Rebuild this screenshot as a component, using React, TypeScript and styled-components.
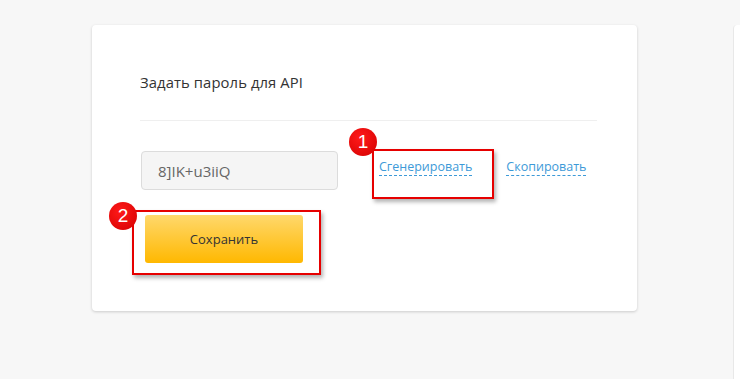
import styled, { createGlobalStyle } from "styled-components";

const GlobalStyle = createGlobalStyle`
    html, body {
        margin: 0;
        padding: 0;
        background: #f7f7f7;
        font-family: "Open Sans", "DejaVu Sans", sans-serif;
    }
`;

const Page = styled.div`
    display: flex;
    align-items: flex-start;
    gap: 96px;
    padding: 25px 0 0 92px;
    height: 354px;
    overflow: hidden;
`;

const Card = styled.div`
    width: 545px;
    height: 286px;
    flex-shrink: 0;
    box-sizing: border-box;
    background: #fff;
    border-radius: 4px;
    box-shadow: 0 1px 3px rgba(0, 0, 0, 0.18);
    padding: 0 40px 0 48px;
`;

const SidePanel = styled.div`
    width: 200px;
    height: 360px;
    flex-shrink: 0;
    background: #fff;
    border-left: 1px solid #e8e8e8;
    border-radius: 4px 0 0 0;
`;

const Title = styled.h2`
    margin: 0;
    padding: 47px 0 28px;
    font-size: 14.8px;
    font-weight: 400;
    color: #333;
    line-height: 20px;
    letter-spacing: 0.1px;
    border-bottom: 1px solid #efefef;
`;

const Body = styled.div`
    display: flex;
    flex-direction: column;
    gap: 25px;
    padding-top: 30px;
`;

const Row = styled.div`
    display: flex;
    align-items: flex-start;
`;

const Input = styled.input`
    width: 197px;
    height: 39px;
    box-sizing: border-box;
    margin-left: 1px;
    padding: 0 16px;
    background: #f5f5f5;
    border: 1px solid #dcdcdc;
    border-radius: 4px;
    font-family: inherit;
    font-size: 15px;
    color: #666;
    outline: none;
`;

const Links = styled.div`
    display: flex;
    gap: 34px;
    margin-left: 41px;
    padding-top: 7px;
`;

const DashLink = styled.a`
    font-size: 12.5px;
    color: #3d9ad8;
    text-decoration: none;
    border-bottom: 1px dashed #3d9ad8;
    line-height: 17px;
    cursor: pointer;
`;

const Annotated = styled.div`
    position: relative;
    display: inline-flex;
`;

const Frame = styled.div<{ $l: number; $t: number; $r: number; $b: number }>`
    position: absolute;
    left: ${(p) => -p.$l}px;
    top: ${(p) => -p.$t}px;
    right: ${(p) => -p.$r}px;
    bottom: ${(p) => -p.$b}px;
    border: 2px solid #e60000;
    box-shadow: 2px 3px 4px rgba(0, 0, 0, 0.3);
    pointer-events: none;
`;

const Badge = styled.span<{ $top: number }>`
    position: absolute;
    left: -25px;
    top: ${(p) => p.$top}px;
    width: 28px;
    height: 28px;
    border-radius: 50%;
    background: radial-gradient(circle at 40% 35%, #ff1a1a, #d40000);
    color: #fff;
    font-size: 19px;
    line-height: 28px;
    text-align: center;
    font-family: "Liberation Sans", Arial, sans-serif;
`;

const SaveButton = styled.button`
    width: 158px;
    height: 48px;
    margin-left: 5px;
    border: none;
    border-radius: 3px;
    background: linear-gradient(to bottom, #ffd86c, #ffb800);
    font-family: inherit;
    font-size: 13px;
    color: #333;
    cursor: pointer;
`;

export default function App() {
    return (
        <>
            <GlobalStyle />
            <Page>
                <Card>
                    <Title>Задать пароль для API</Title>
                    <Body>
                        <Row>
                            <Input defaultValue="8]IK+u3iiQ" readOnly />
                            <Links>
                                <Annotated>
                                    <DashLink>Сгенерировать</DashLink>
                                    <Frame $l={7} $t={9} $r={22} $b={23}>
                                        <Badge $top={-23}>1</Badge>
                                    </Frame>
                                </Annotated>
                                <DashLink>Скопировать</DashLink>
                            </Links>
                        </Row>
                        <Row>
                            <Annotated>
                                <SaveButton>Сохранить</SaveButton>
                                <Frame $l={8} $t={5} $r={18} $b={12}>
                                    <Badge $top={-10}>2</Badge>
                                </Frame>
                            </Annotated>
                        </Row>
                    </Body>
                </Card>
                <SidePanel />
            </Page>
        </>
    );
}
